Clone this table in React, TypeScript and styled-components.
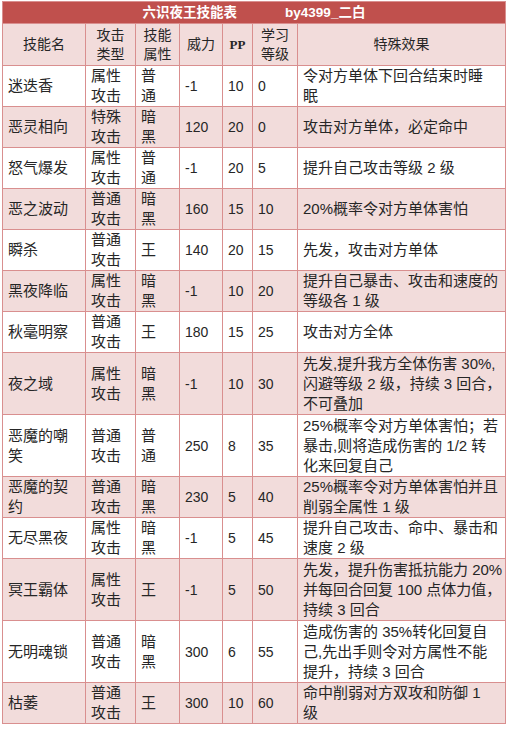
import React from 'react';
import styled, { createGlobalStyle } from 'styled-components';

const Global = createGlobalStyle`
  html, body { margin: 0; padding: 0; background: #ffffff; }
  body { font-family: "Liberation Sans", "Noto Sans CJK SC", sans-serif; color: #262626; }
`;

const BORDER = '#d98f8f';
const PINK = '#f2dcdb';

const Table = styled.div`
  margin: 1px 0 0 2px;
  width: 504px;
  box-sizing: border-box;
  display: grid;
  grid-template-columns: 82px 49px 43px 42px 29px 44px 207px;
  gap: 1px;
  padding: 1px;
  background: ${BORDER};
`;

const Title = styled.div`
  grid-column: 1 / -1;
  height: 21px;
  background: #c0504d;
  color: #ffffff;
  font-weight: bold;
  font-size: 13.5px;
  display: flex;
  align-items: center;
  justify-content: center;
  gap: 48px;
  line-height: 21px;
`;

const HeadCell = styled.div<{ $serif?: boolean }>`
  height: 41px;
  background: ${PINK};
  display: flex;
  flex-direction: column;
  align-items: center;
  justify-content: center;
  font-size: ${(p) => (p.$serif ? '13px' : '14px')};
  font-family: ${(p) =>
    p.$serif ? '"Liberation Serif", serif' : '"Liberation Sans", "Noto Sans CJK SC", sans-serif'};
  font-weight: ${(p) => (p.$serif ? 'bold' : 'normal')};
  line-height: 19px;
  white-space: nowrap;
`;

const Cell = styled.div<{ $pink: boolean; $tall: boolean; $num?: boolean }>`
  height: ${(p) => (p.$tall ? '61px' : '40px')};
  background: ${(p) => (p.$pink ? PINK : '#ffffff')};
  display: flex;
  flex-direction: column;
  justify-content: center;
  align-items: flex-start;
  padding: 0 0 0 5px;
  box-sizing: border-box;
  font-size: ${(p) => (p.$num ? '14px' : '15px')};
  line-height: 20px;
  white-space: nowrap;
  overflow: visible;
`;

type Row = {
  name: string[];
  type: string[];
  attr: string[];
  power: string;
  pp: string;
  lv: string;
  eff: string[];
};

const rows: Row[] = [
  { name: ['迷迭香'], type: ['属性', '攻击'], attr: ['普', '通'], power: '-1', pp: '10', lv: '0', eff: ['令对方单体下回合结束时睡', '眠'] },
  { name: ['恶灵相向'], type: ['特殊', '攻击'], attr: ['暗', '黑'], power: '120', pp: '20', lv: '0', eff: ['攻击对方单体，必定命中'] },
  { name: ['怒气爆发'], type: ['属性', '攻击'], attr: ['普', '通'], power: '-1', pp: '20', lv: '5', eff: ['提升自己攻击等级 2 级'] },
  { name: ['恶之波动'], type: ['普通', '攻击'], attr: ['暗', '黑'], power: '160', pp: '15', lv: '10', eff: ['20%概率令对方单体害怕'] },
  { name: ['瞬杀'], type: ['普通', '攻击'], attr: ['王'], power: '140', pp: '20', lv: '15', eff: ['先发，攻击对方单体'] },
  { name: ['黑夜降临'], type: ['属性', '攻击'], attr: ['暗', '黑'], power: '-1', pp: '10', lv: '20', eff: ['提升自己暴击、攻击和速度的', '等级各 1 级'] },
  { name: ['秋毫明察'], type: ['普通', '攻击'], attr: ['王'], power: '180', pp: '15', lv: '25', eff: ['攻击对方全体'] },
  { name: ['夜之域'], type: ['属性', '攻击'], attr: ['暗', '黑'], power: '-1', pp: '10', lv: '30', eff: ['先发,提升我方全体伤害 30%,', '闪避等级 2 级，持续 3 回合，', '不可叠加'] },
  { name: ['恶魔的嘲', '笑'], type: ['普通', '攻击'], attr: ['普', '通'], power: '250', pp: '8', lv: '35', eff: ['25%概率令对方单体害怕；若', '暴击,则将造成伤害的 1/2 转', '化来回复自己'] },
  { name: ['恶魔的契', '约'], type: ['普通', '攻击'], attr: ['暗', '黑'], power: '230', pp: '5', lv: '40', eff: ['25%概率令对方单体害怕并且', '削弱全属性 1 级'] },
  { name: ['无尽黑夜'], type: ['属性', '攻击'], attr: ['暗', '黑'], power: '-1', pp: '5', lv: '45', eff: ['提升自己攻击、命中、暴击和', '速度 2 级'] },
  { name: ['冥王霸体'], type: ['属性', '攻击'], attr: ['王'], power: '-1', pp: '5', lv: '50', eff: ['先发，提升伤害抵抗能力 20%', '并每回合回复 100 点体力值，', '持续 3 回合'] },
  { name: ['无明魂锁'], type: ['普通', '攻击'], attr: ['暗', '黑'], power: '300', pp: '6', lv: '55', eff: ['造成伤害的 35%转化回复自', '己,先出手则令对方属性不能', '提升，持续 3 回合'] },
  { name: ['枯萎'], type: ['普通', '攻击'], attr: ['王'], power: '300', pp: '10', lv: '60', eff: ['命中削弱对方双攻和防御 1', '级'] },
];

const Lines = ({ items }: { items: string[] }) => (
  <>
    {items.map((t, i) => (
      <span key={i}>{t}</span>
    ))}
  </>
);

export default function App() {
  return (
    <>
      <Global />
      <Table>
        <Title>
          <span>六识夜王技能表</span>
          <span>by4399_二白</span>
        </Title>
        <HeadCell>技能名</HeadCell>
        <HeadCell>
          <span>攻击</span>
          <span>类型</span>
        </HeadCell>
        <HeadCell>
          <span>技能</span>
          <span>属性</span>
        </HeadCell>
        <HeadCell>威力</HeadCell>
        <HeadCell $serif>PP</HeadCell>
        <HeadCell>
          <span>学习</span>
          <span>等级</span>
        </HeadCell>
        <HeadCell>特殊效果</HeadCell>
        {rows.map((r, i) => {
          const pink = i % 2 === 1;
          const tall = r.eff.length > 2;
          return (
            <React.Fragment key={i}>
              <Cell $pink={pink} $tall={tall}>
                <Lines items={r.name} />
              </Cell>
              <Cell $pink={pink} $tall={tall}>
                <Lines items={r.type} />
              </Cell>
              <Cell $pink={pink} $tall={tall}>
                <Lines items={r.attr} />
              </Cell>
              <Cell $pink={pink} $tall={tall} $num>
                {r.power}
              </Cell>
              <Cell $pink={pink} $tall={tall} $num>
                {r.pp}
              </Cell>
              <Cell $pink={pink} $tall={tall} $num>
                {r.lv}
              </Cell>
              <Cell $pink={pink} $tall={tall}>
                <Lines items={r.eff} />
              </Cell>
            </React.Fragment>
          );
        })}
      </Table>
    </>
  );
}
